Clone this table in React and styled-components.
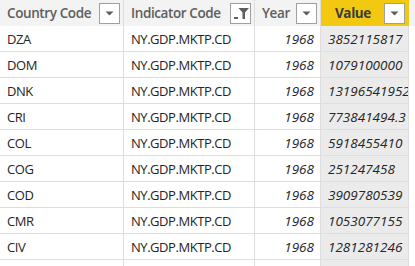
import styled, { createGlobalStyle } from 'styled-components'

const Global = createGlobalStyle`
    body {
        margin: 0;
        background: #ffffff;
        font-family: "Open Sans", "Noto Sans", sans-serif;
    }
`

const cols = '124px 131px 66px 88px'

const Table = styled.div`
    width: 415px;
    height: 266px;
    overflow: hidden;
    background: #ffffff;
`
const HeaderRow = styled.div`
    display: grid;
    grid-template-columns: ${cols};
    height: 26px;
    background: #f3f3f3;
`
const HeaderCell = styled.div`
    display: flex;
    align-items: center;
    justify-content: space-between;
    padding: 0 3px 0 7px;
    border-right: 1px solid ${p => (p.$active ? '#f2c811' : '#dedede')};
    background: ${p => (p.$active ? '#f2c811' : 'transparent')};
    color: ${p => (p.$active ? '#3b3a39' : '#605e5c')};
    font-size: 13.5px;
    font-weight: ${p => (p.$active ? 700 : 600)};
    letter-spacing: -0.4px;
    white-space: nowrap;
`
const HeaderLabel = styled.span`
    padding-left: ${p => p.$indent || 0}px;
`
const DropButton = styled.div`
    width: 19px;
    height: 19px;
    border: 1px solid #a19f9d;
    background: #ffffff;
    display: flex;
    align-items: center;
    justify-content: center;
    flex-shrink: 0;
`
const Row = styled.div`
    display: grid;
    grid-template-columns: ${cols};
    height: 26px;
`
const Cell = styled.div`
    display: flex;
    align-items: center;
    justify-content: ${p => (p.$right ? 'flex-end' : 'flex-start')};
    padding: 0 ${p => (p.$right ? '6px' : '0')} 0 ${p => (p.$right ? '0' : '7px')};
    border-right: 1px solid #dedede;
    border-bottom: 1px solid #dedede;
    background: ${p => (p.$shade ? '#ebebeb' : '#ffffff')};
    color: #252423;
    font-size: ${p => (p.$italic ? '13.5px' : '13px')};
    font-style: ${p => (p.$italic ? 'italic' : 'normal')};
    letter-spacing: ${p => (p.$italic ? '0' : '-0.45px')};
    white-space: nowrap;
    overflow: hidden;
`

const Arrow = () => (
    <svg width="9" height="5" viewBox="0 0 9 5">
        <path d="M0.5 0.5 H8.5 L4.5 4.5 Z" fill="#605e5c" />
    </svg>
)

const Funnel = () => (
    <svg width="19" height="19" viewBox="0 0 19 19">
        <rect x="3" y="13" width="4" height="2" fill="#605e5c" />
        <path d="M7.5 4 H18 L14 8.5 V15 H11.5 V8.5 Z" fill="#605e5c" />
    </svg>
)

const rows = [
    ['DZA', '3852115817'],
    ['DOM', '1079100000'],
    ['DNK', '13196541952'],
    ['CRI', '773841494.3'],
    ['COL', '5918455410'],
    ['COG', '251247458'],
    ['COD', '3909780539'],
    ['CMR', '1053077155'],
    ['CIV', '1281281246'],
    ['', ''],
]

const App = () => {
    return (
        <Table>
            <Global />
            <HeaderRow>
                <HeaderCell>
                    <HeaderLabel>Country Code</HeaderLabel>
                    <DropButton><Arrow /></DropButton>
                </HeaderCell>
                <HeaderCell>
                    <HeaderLabel>Indicator Code</HeaderLabel>
                    <DropButton><Funnel /></DropButton>
                </HeaderCell>
                <HeaderCell>
                    <HeaderLabel>Year</HeaderLabel>
                    <DropButton><Arrow /></DropButton>
                </HeaderCell>
                <HeaderCell $active>
                    <HeaderLabel $indent={7}>Value</HeaderLabel>
                    <DropButton><Arrow /></DropButton>
                </HeaderCell>
            </HeaderRow>
            {rows.map(([code, value], i) => (
                <Row key={i}>
                    <Cell>{code}</Cell>
                    <Cell>{code && 'NY.GDP.MKTP.CD'}</Cell>
                    <Cell $right $italic>{code && '1968'}</Cell>
                    <Cell $shade $italic>{value}</Cell>
                </Row>
            ))}
        </Table>
    )
}

export default App
